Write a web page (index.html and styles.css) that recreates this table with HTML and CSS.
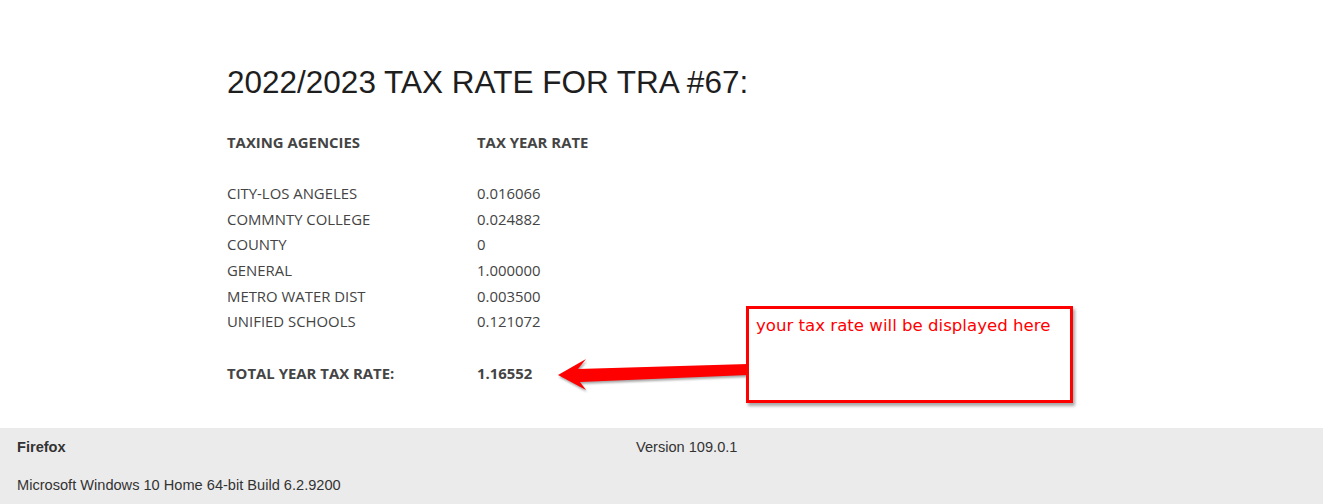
FILE: index.html
```html
<!DOCTYPE html>
<html lang="en">
<head>
<meta charset="utf-8">
<title>Tax Rate</title>
<link rel="stylesheet" href="styles.css">
</head>
<body>
<main class="content">
  <h1 class="title">2022/2023 TAX RATE FOR TRA #67:</h1>
  <div class="rates">
    <div class="row head"><span>TAXING AGENCIES</span><span>TAX YEAR RATE</span></div>
    <div class="row first"><span>CITY-LOS ANGELES</span><span>0.016066</span></div>
    <div class="row"><span>COMMNTY COLLEGE</span><span>0.024882</span></div>
    <div class="row"><span>COUNTY</span><span>0</span></div>
    <div class="row"><span>GENERAL</span><span>1.000000</span></div>
    <div class="row"><span>METRO WATER DIST</span><span>0.003500</span></div>
    <div class="row"><span>UNIFIED SCHOOLS</span><span>0.121072</span></div>
    <div class="row total"><span>TOTAL YEAR TAX RATE:</span><span>1.16552</span></div>
  </div>
</main>
<svg class="arrow" width="200" height="46" viewBox="0 0 200 46" aria-hidden="true">
  <polygon points="8,25 36,9 28,19 198,14 198,25 30,32 36,40" fill="#ff0000"/>
</svg>
<div class="callout">your tax rate will be displayed here</div>
<footer class="footer">
  <div class="f-row"><span class="f-name">Firefox</span><span>Version 109.0.1</span></div>
  <div class="f-row"><span>Microsoft Windows 10 Home 64-bit Build 6.2.9200</span></div>
</footer>
</body>
</html>
```

FILE: styles.css
```css
html, body {
  margin: 0;
  padding: 0;
  background: #ffffff;
}
.content {
  padding: 64px 0 0 227px;
  height: 428px;
  box-sizing: border-box;
}
.title {
  margin: 0;
  font-family: "Liberation Sans", Arial, sans-serif;
  font-weight: 400;
  font-size: 31.5px;
  line-height: 37px;
  color: #1e1e1e;
}
.rates {
  margin-top: 29px;
  font-family: "Open Sans", sans-serif;
  font-size: 14.9px;
  color: #444444;
}
.row {
  display: grid;
  grid-template-columns: 250px auto;
  height: 25.6px;
  line-height: 25.6px;
}
.row.head, .row.total {
  font-weight: 700;
}
.row.first {
  margin-top: 25.6px;
}
.row.total {
  margin-top: 26px;
}
.arrow {
  position: absolute;
  left: 550px;
  top: 350px;
  filter: drop-shadow(1px 2px 1px rgba(0,0,0,0.35));
}
.callout {
  position: absolute;
  left: 746px;
  top: 306px;
  width: 327px;
  height: 97px;
  box-sizing: border-box;
  border: 3px solid #ff0000;
  background: #ffffff;
  box-shadow: 2px 3px 3px rgba(0,0,0,0.35);
  padding: 6px 0 0 7px;
  font-family: "DejaVu Sans", Tahoma, sans-serif;
  font-size: 16.6px;
  line-height: 22px;
  color: #ff0000;
}
.footer {
  background: #ebebeb;
  height: 76px;
  padding: 9px 17px 0;
  box-sizing: border-box;
  font-family: "Liberation Sans", Arial, sans-serif;
  font-size: 14.6px;
  color: #333333;
}
.f-row {
  display: grid;
  grid-template-columns: 619px auto;
  height: 20px;
  line-height: 20px;
}
.f-row + .f-row {
  margin-top: 18px;
}
.f-name {
  font-weight: 700;
}
```
